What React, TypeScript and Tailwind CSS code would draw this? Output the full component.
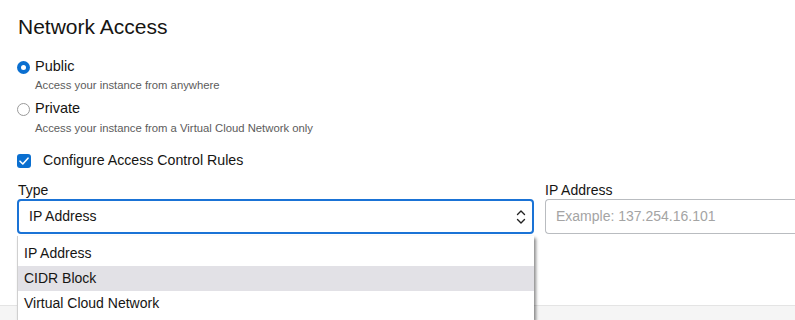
import { useState } from 'react';

const options = ['IP Address', 'CIDR Block', 'Virtual Cloud Network'];

function Radio({ checked }: { checked: boolean }) {
  return checked ? (
    <span className="w-[13px] h-[13px] rounded-full bg-[#0a6fd0] flex items-center justify-center shrink-0">
      <span className="w-[5px] h-[5px] rounded-full bg-white" />
    </span>
  ) : (
    <span className="w-[13px] h-[13px] rounded-full border border-[#9a9a9a] bg-white shrink-0" />
  );
}

export default function App() {
  const [access] = useState('public');

  return (
    <div className="relative w-[795px] h-[320px] overflow-hidden bg-white text-[#161513] font-['Liberation_Sans',Arial,sans-serif]">
      <div className="pl-[17px] pt-[13px]">
        <h2 className="text-[21px] leading-[28px] pl-[1px]">Network Access</h2>

        {/* Access type radios */}
        <div className="mt-[18px] flex flex-col">
          <label className="flex items-center gap-[5px] h-[16px]">
            <Radio checked={access === 'public'} />
            <span className="text-[14.5px]">Public</span>
          </label>
          <p className="pl-[18px] mt-[3px] text-[11.3px] leading-[14px] text-[#5c5c5c]">Access your instance from anywhere</p>
          <label className="flex items-center gap-[5px] h-[16px] mt-[9px]">
            <Radio checked={access === 'private'} />
            <span className="text-[14.5px]">Private</span>
          </label>
          <p className="pl-[18px] mt-[4px] text-[11.3px] leading-[14px] text-[#5c5c5c]">Access your instance from a Virtual Cloud Network only</p>
        </div>

        {/* ACL checkbox */}
        <label className="mt-[18px] flex items-center gap-[12px] h-[16px]">
          <span className="w-[14px] h-[14px] rounded-[3px] bg-[#0a6fd0] flex items-center justify-center">
            <svg width="10" height="8" viewBox="0 0 10 8" fill="none">
              <path d="M1 4.2 L3.8 7 L9 1.2" stroke="white" strokeWidth="1.6" strokeLinecap="round" strokeLinejoin="round" />
            </svg>
          </span>
          <span className="text-[14.2px]">Configure Access Control Rules</span>
        </label>

        <div className="mt-[13px] flex gap-[11px]">
          <div className="relative w-[517px]">
            <div className="text-[14px] leading-[16px] pl-[1px]">Type</div>
            <div className="mt-[1px] h-[35px] rounded-[4px] border-2 border-[#1a73d6] flex items-center justify-between pl-[10px] pr-[6px]">
              <span className="text-[14px]">IP Address</span>
              <svg width="10" height="16" viewBox="0 0 10 16" fill="none">
                <path d="M1.5 5.5 L5 2 L8.5 5.5" stroke="#222" strokeWidth="1.4" strokeLinecap="round" strokeLinejoin="round" />
                <path d="M1.5 10.5 L5 14 L8.5 10.5" stroke="#222" strokeWidth="1.4" strokeLinecap="round" strokeLinejoin="round" />
              </svg>
            </div>
            {/* open dropdown list */}
            <ul className="absolute z-10 left-0 top-[54px] w-[517px] bg-white border-l border-[#d0d0d0] shadow-[2px_2px_3px_rgba(0,0,0,0.45)] pt-[5px] pb-[4px]">
              {options.map((o, i) => (
                <li
                  key={o}
                  className={`h-[25px] flex items-center pl-[6px] text-[14px] ${i === 1 ? 'bg-[#e2e1e6]' : ''}`}
                >
                  {o}
                </li>
              ))}
            </ul>
          </div>
          <div className="flex-1">
            <div className="text-[14px] leading-[16px]">IP Address</div>
            <div className="mt-[1px] h-[35px] rounded-l-[4px] border border-r-0 border-[#b9bcc0] flex items-center pl-[10px]">
              <span className="text-[14px] text-[#a4a4a4]">Example: 137.254.16.101</span>
            </div>
          </div>
        </div>
      </div>

      {/* footer strip */}
      <div className="mt-[71px] h-[40px] border-t border-[#e4e4e4] bg-[#f5f5f5]" />
    </div>
  );
}
